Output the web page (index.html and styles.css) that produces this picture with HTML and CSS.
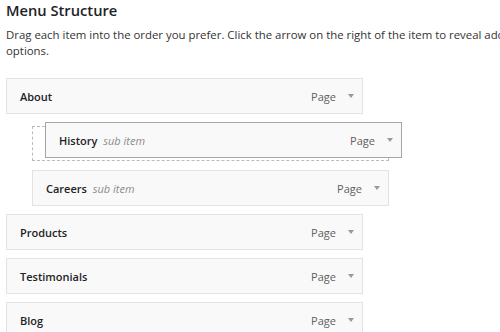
FILE: index.html
```html
<!DOCTYPE html>
<html lang="en">
<head>
  <meta charset="UTF-8">
  <title>Menu Structure</title>
  <link rel="stylesheet" href="styles.css">
</head>
<body>
  <div class="wrap">
    <h3>Menu Structure</h3>
    <p class="intro">Drag each item into the order you prefer. Click the arrow on the right of the item to reveal additional options.</p>

    <ul class="menu">
      <li class="item">
        <span class="title">About</span>
        <span class="controls"><span class="type">Page</span><span class="arrow"></span></span>
      </li>

      <!-- placeholder left behind by the item being dragged -->
      <li class="placeholder">
        <div class="item dragging">
          <span class="title">History <em class="sub">sub item</em></span>
          <span class="controls"><span class="type">Page</span><span class="arrow"></span></span>
        </div>
      </li>

      <li class="item depth-1">
        <span class="title">Careers <em class="sub">sub item</em></span>
        <span class="controls"><span class="type">Page</span><span class="arrow"></span></span>
      </li>
      <li class="item">
        <span class="title">Products</span>
        <span class="controls"><span class="type">Page</span><span class="arrow"></span></span>
      </li>
      <li class="item">
        <span class="title">Testimonials</span>
        <span class="controls"><span class="type">Page</span><span class="arrow"></span></span>
      </li>
      <li class="item">
        <span class="title">Blog</span>
        <span class="controls"><span class="type">Page</span><span class="arrow"></span></span>
      </li>
    </ul>
  </div>
</body>
</html>
```

FILE: styles.css
```css
* { box-sizing: border-box; }
body {
  margin: 0;
  font-family: 'Open Sans', sans-serif;
  background: #fff;
  color: #444;
  overflow: hidden;
}
.wrap {
  width: 555px;
  padding-left: 6px;
}
h3 {
  margin: 0;
  font-size: 14.7px;
  font-weight: 600;
  line-height: 20px;
  color: #1d2327;
}
.intro {
  margin: 6.5px 0 0;
  font-size: 11.4px;
  line-height: 16.5px;
  color: #333;
}
.menu {
  list-style: none;
  margin: 18.5px 0 0;
  padding: 0;
}
.item {
  width: 357px;
  height: 36px;
  margin-top: 8px;
  padding: 0 8px 0 13px;
  display: flex;
  align-items: center;
  justify-content: space-between;
  background: #f9f9f9;
  border: 1px solid #e2e2e2;
  font-size: 11px;
}
.menu > .item:first-child {
  margin-top: 0;
}
.depth-1 {
  margin-left: 26px;
}
.title {
  font-weight: 600;
  color: #1d2327;
}
.sub {
  margin-left: 3px;
  font-weight: 400;
  color: #8c8c8c;
}
.controls {
  display: flex;
  align-items: center;
}
.type {
  color: #5f5f5f;
}
.arrow {
  margin-left: 12px;
  width: 0;
  height: 0;
  border-top: 4px solid #999;
  border-left: 3px solid transparent;
  border-right: 3px solid transparent;
}
.placeholder {
  position: relative;
  width: 357px;
  height: 35px;
  margin: 12px 0 0 26px;
  border: 1px dashed #bbb;
}
.placeholder + .item {
  margin-top: 9px;
}
.dragging {
  position: absolute;
  left: 12px;
  top: -5px;
  margin: 0;
  border-color: #a5a5a5;
}
```
